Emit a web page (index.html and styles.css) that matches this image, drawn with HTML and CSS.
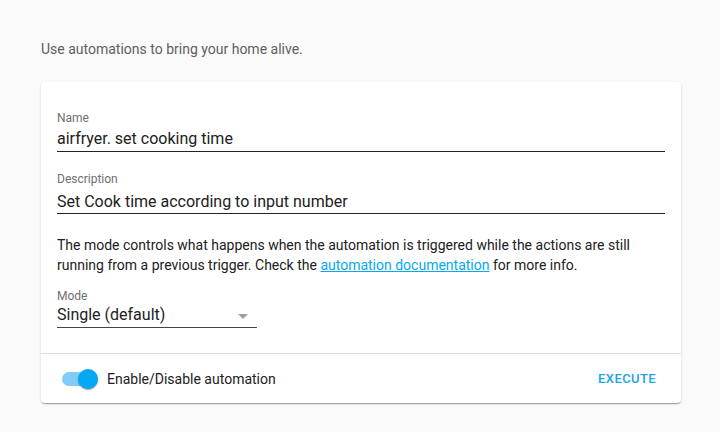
FILE: index.html
```html
<!DOCTYPE html>
<html lang="en">
<head>
<meta charset="utf-8">
<title>Automation editor</title>
<link rel="stylesheet" href="styles.css">
</head>
<body>
<main class="page">
  <p class="intro">Use automations to bring your home alive.</p>
  <section class="card">
    <div class="card-content">
      <div class="field field-name">
        <span class="field-label">Name</span>
        <span class="field-value">airfryer. set cooking time</span>
      </div>
      <div class="field field-desc">
        <span class="field-label">Description</span>
        <span class="field-value">Set Cook time according to input number</span>
      </div>
      <p class="help">The mode controls what happens when the automation is triggered while the actions are still running from a previous trigger. Check the <a href="#" class="link">automation documentation</a> for more info.</p>
      <div class="field field-mode">
        <span class="field-label">Mode</span>
        <span class="field-value select-value">Single (default)<span class="arrow"></span></span>
      </div>
    </div>
    <div class="card-actions">
      <label class="toggle">
        <span class="switch"><span class="track"></span><span class="thumb"></span></span>
        <span class="toggle-text">Enable/Disable automation</span>
      </label>
      <button class="btn-text" type="button">Execute</button>
    </div>
  </section>
</main>
</body>
</html>
```
FILE: styles.css
```css
* { box-sizing: border-box; }
html, body { margin: 0; padding: 0; }
body {
  background: #fafafa;
  font-family: Roboto, "Liberation Sans", Arial, sans-serif;
  color: #212121;
  width: 720px;
  height: 432px;
  overflow: hidden;
}
.page {
  padding: 39px 39px 0 41px;
}
.intro {
  margin: 0 0 23px;
  font-size: 14px;
  line-height: 20px;
  color: #5f5f5f;
}
.card {
  background: #fff;
  border-radius: 4px;
  box-shadow: 0 2px 1px -1px rgba(0,0,0,.2), 0 1px 1px 0 rgba(0,0,0,.14), 0 1px 3px 0 rgba(0,0,0,.12);
  width: 640px;
}
.card-content {
  padding: 16px 16px 25px;
  display: flex;
  flex-direction: column;
}
.field {
  display: flex;
  flex-direction: column;
  border-bottom: 1px solid #222;
}
.field-label {
  font-size: 12px;
  line-height: 16px;
  color: #6f6f6f;
}
.field-value {
  font-size: 16px;
  line-height: 20px;
  color: #212121;
}
.field-name { padding: 12px 0 2px; }
.field-name .field-value { margin-top: 3px; }
.field-desc { margin-top: 19px; padding-bottom: 1px; }
.field-desc .field-value { margin-top: 5px; }
.help {
  margin: 21px 0 0;
  font-size: 14px;
  line-height: 20px;
  color: #212121;
}
.link { color: #03a9f4; text-decoration: underline; }
.field-mode {
  margin-top: 13px;
  width: 200px;
  padding-bottom: 2px;
  border-bottom-color: #444;
}
.field-mode .field-value { margin-top: 1px; }
.select-value {
  display: flex;
  align-items: center;
  justify-content: space-between;
}
.arrow {
  width: 0;
  height: 0;
  border-left: 5px solid transparent;
  border-right: 5px solid transparent;
  border-top: 5px solid #9e9e9e;
  margin: 3px 9px 0 0;
}
.card-actions {
  border-top: 1px solid #e0e0e0;
  height: 50px;
  display: flex;
  align-items: center;
  justify-content: space-between;
  padding: 0 17px 0 21px;
}
.toggle {
  display: flex;
  align-items: center;
  gap: 9px;
  font-size: 14px;
  line-height: 20px;
  color: #212121;
}
.switch {
  position: relative;
  width: 36px;
  height: 20px;
  display: flex;
  align-items: center;
}
.track {
  width: 36px;
  height: 14px;
  border-radius: 7px;
  background: #7fcdf7;
}
.thumb {
  position: absolute;
  right: 0;
  top: 0;
  width: 20px;
  height: 20px;
  border-radius: 50%;
  background: #03a9f4;
  box-shadow: 0 2px 1px -1px rgba(0,0,0,.2), 0 1px 1px 0 rgba(0,0,0,.14), 0 1px 3px 0 rgba(0,0,0,.12);
}
.btn-text {
  background: none;
  border: 0;
  padding: 0 8px;
  height: 36px;
  font-family: inherit;
  font-size: 13px;
  font-weight: 500;
  letter-spacing: 0.4px;
  text-transform: uppercase;
  color: #1ea3e6;
}
```
